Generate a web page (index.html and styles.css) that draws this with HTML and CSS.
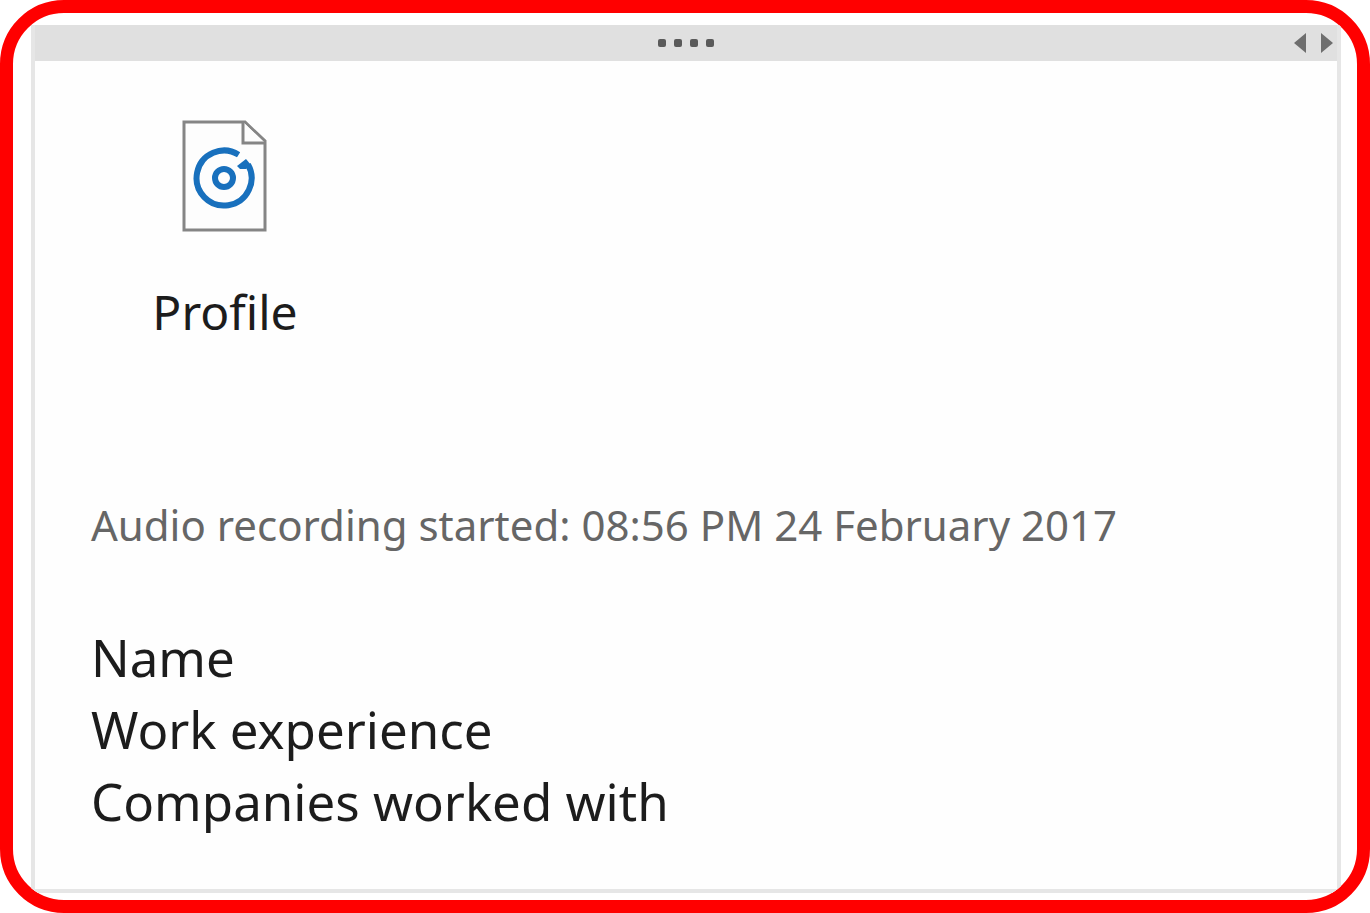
FILE: index.html
```html
<!DOCTYPE html>
<html lang="en">

<head>
    <meta charset="UTF-8">
    <meta name="viewport" content="width=device-width, initial-scale=1.0">
    <title>Profile note</title>
    <link rel="stylesheet" href="styles.css">
</head>

<body>
    <div class="frame">
        <div class="note">
            <div class="note-bar">
                <div class="dots">
                    <span></span>
                    <span></span>
                    <span></span>
                    <span></span>
                </div>
                <svg class="arrows" width="40" height="22" viewBox="0 0 40 22">
                    <path d="M12 1V21L0 11Z" />
                    <path d="M27 1V21L39 11Z" />
                </svg>
            </div>

            <div class="note-body">
                <div class="file">
                    <svg class="file-icon" width="86" height="112" viewBox="0 0 86 112">
                        <path class="page" d="M2 2H63L83 21V110H2Z" />
                        <path class="page" d="M61 2V23H83" />
                        <path class="disc" d="M56.600 34.700A27.500 27.500 0 1 0 66 44.500" />
                        <path class="needle" d="M55 46L64 39L69 45L64 49L58 49Z" />
                        <circle class="disc" cx="42" cy="58" r="9" />
                    </svg>
                    <p class="file-name">Profile</p>
                </div>

                <p class="recording">Audio recording started: 08:56 PM 24 February 2017</p>

                <div class="lines">
                    <p>Name</p>
                    <p>Work experience</p>
                    <p>Companies worked with</p>
                </div>
            </div>
        </div>
    </div>
</body>

</html>
```
FILE: styles.css
```css
* {
    padding: 0;
    margin: 0;
    box-sizing: border-box;
}

body {
    background-color: white;
    font-family: "Noto Sans", Calibri, sans-serif;
}

.frame {
    display: flex;
    min-height: 100vh;
    padding: 12px 16px 7px 18px;
    border: 13px solid red;
    border-radius: 64px;
    overflow: hidden;
}

.note {
    flex: 1;
    border: 4px solid #e6e6e6;
    border-top: none;
    background-color: #fefefe;
}

.note-bar {
    display: grid;
    grid-template-columns: 1fr auto 1fr;
    align-items: center;
    height: 36px;
    background-color: #e0e0e0;
}

.dots {
    display: flex;
    grid-column: 2;
    gap: 8px;
}

.dots span {
    width: 8px;
    height: 8px;
    border-radius: 2px;
    background-color: #5a5a5a;
}

.arrows {
    justify-self: end;
    margin-right: 3px;
    fill: #6e6e6e;
}

.note-body {
    padding: 59px 56px 46px;
}

.file {
    display: flex;
    flex-direction: column;
    align-items: center;
    gap: 44px;
    width: 268px;
}

.file-icon {
    fill: none;
}

.page {
    fill: #fdfdfd;
    stroke: #858585;
    stroke-width: 3;
}

.disc {
    stroke: #1870bd;
    stroke-width: 6;
}

.needle {
    fill: #1870bd;
}

.file-name {
    color: #1c1c1c;
    font-size: 48px;
    line-height: 72px;
}

.recording {
    margin: 141px 0 60px;
    color: #666;
    font-size: 42px;
    line-height: 72px;
}

.lines {
    color: #1c1c1c;
    font-size: 51px;
    line-height: 72px;
}
```
